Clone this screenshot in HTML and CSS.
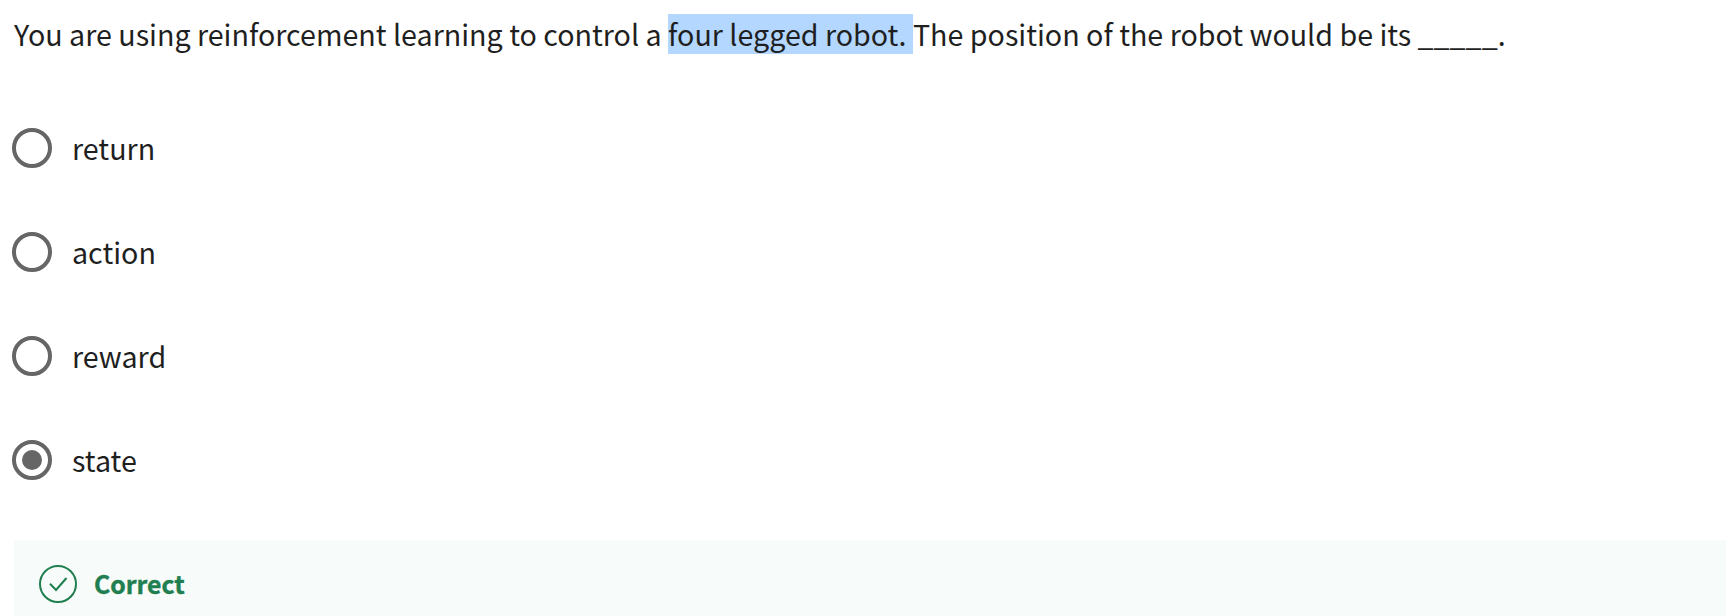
FILE: index.html
```html
<!DOCTYPE html>
<html lang="en">
<head>
<meta charset="utf-8">
<title>Quiz question</title>
<link rel="stylesheet" href="styles.css">
</head>
<body>
<main class="question">
  <p class="prompt">You are using reinforcement learning to control a <span class="selected">four legged robot. </span>The position of the robot would be its _____.</p>
  <div class="options">
    <div class="option"><span class="radio"></span><span class="label">return</span></div>
    <div class="option"><span class="radio"></span><span class="label">action</span></div>
    <div class="option"><span class="radio"></span><span class="label">reward</span></div>
    <div class="option"><span class="radio checked"></span><span class="label">state</span></div>
  </div>
  <div class="feedback">
    <svg class="check" viewBox="0 0 38 38"><circle cx="19" cy="19" r="18"/><path d="M11 18.7l6 6.3L27.5 13"/></svg>
    <span class="verdict">Correct</span>
  </div>
</main>
</body>
</html>
```

FILE: styles.css
```css
* { box-sizing: border-box; }
body {
  margin: 0;
  height: 616px;
  overflow: hidden;
  background: #fff;
  color: #1f1f1f;
  font-family: "Noto Sans CJK SC", "Noto Sans", sans-serif;
}
.question { padding-top: 14px; }
.prompt {
  margin: 0 0 0 14px;
  height: 40px;
  line-height: 39px;
  font-size: 28.65px;
  white-space: nowrap;
}
.selected {
  display: inline-block;
  height: 40px;
  vertical-align: top;
  line-height: 39px;
  white-space: pre;
  background: #b3d7ff;
}
.options {
  display: flex;
  flex-direction: column;
  gap: 64px;
  padding: 74px 0 0 12px;
}
.option { display: flex; align-items: center; gap: 20px; height: 40px; }
.radio {
  display: grid;
  place-items: center;
  width: 40px;
  height: 40px;
  border: 4px solid #666;
  border-radius: 50%;
}
.checked::after {
  content: "";
  width: 20px;
  height: 20px;
  border-radius: 50%;
  background: #666;
}
.label { font-size: 28.65px; line-height: 40px; }
.feedback {
  display: flex;
  align-items: center;
  gap: 17px;
  height: 88px;
  margin: 60px 0 0 14px;
  padding-left: 25px;
  background: #f7fbf9;
}
.check {
  width: 38px;
  height: 38px;
  fill: none;
  stroke: #1f7f50;
  stroke-width: 2;
}
.verdict {
  color: #1f7f50;
  font-size: 24.8px;
  line-height: 38px;
  padding-bottom: 2px;
  font-weight: 700;
  -webkit-text-stroke: 0.4px #1f7f50;
}
```
